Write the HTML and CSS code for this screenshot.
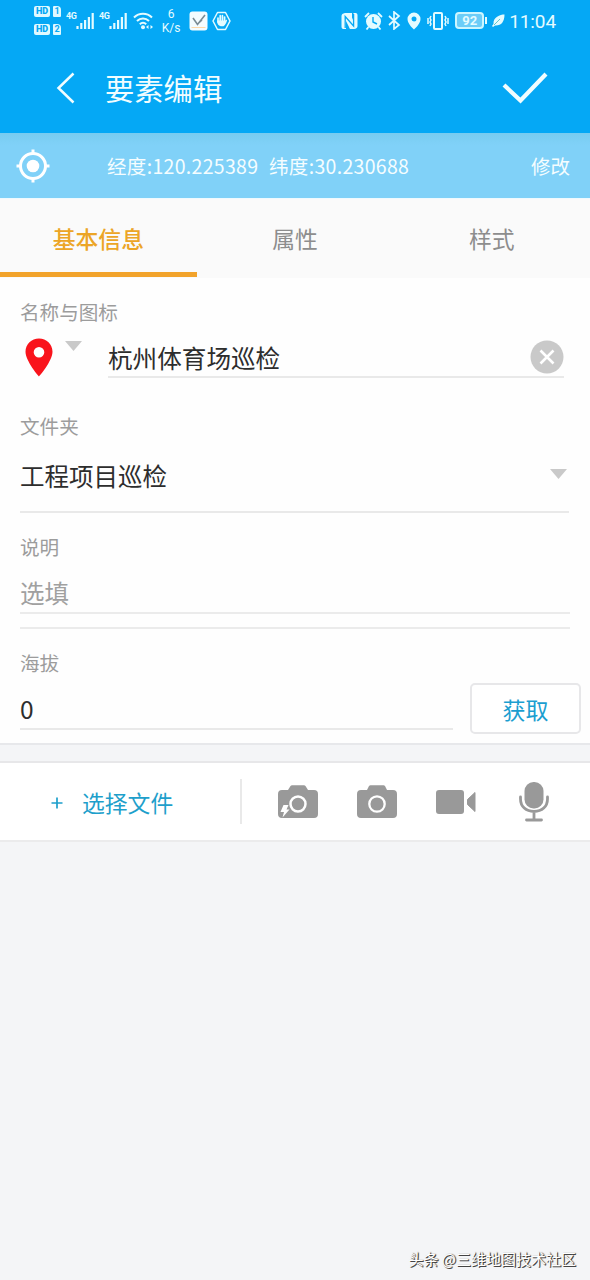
FILE: index.html
```html
<!DOCTYPE html>
<html lang="zh-CN">
<head>
<meta charset="utf-8">
<title>要素编辑</title>
<link rel="stylesheet" href="styles.css">
</head>
<body>
<div class="screen">
  <header class="header">
    <div class="status">
      <div class="status-left">
        <div class="sims">
          <div class="sim"><b>HD</b><i>1</i></div>
          <div class="sim"><b>HD</b><i>2</i></div>
        </div>
        <div class="signal"><span>4G</span>
          <svg width="18" height="17" viewBox="0 0 18 17"><path d="M1.5 17v-3M5.3 17v-6M9.1 17V8M12.9 17V5M16.7 17V1" stroke="currentColor" stroke-width="2.2"/></svg></div>
        <div class="signal"><span>4G</span>
          <svg width="18" height="17" viewBox="0 0 18 17"><path d="M1.5 17v-3M5.3 17v-6M9.1 17V8M12.9 17V5M16.7 17V1" stroke="currentColor" stroke-width="2.2"/></svg></div>
        <svg class="wifi" width="22" height="18" viewBox="0 0 22 18"><g fill="none" stroke="currentColor" stroke-width="2"><path d="M1 5.5c5-5 13-5 18 0M4 9c3.500-3.500 8.500-3.500 12 0M6.800 12.200c2-2 4.400-2 6.400 0"/></g><circle cx="10" cy="15.300" r="2" fill="currentColor"/><path d="M13 15l2.500-2v4zM20 15l-2.500-2v4z" fill="currentColor"/></svg>
        <div class="speed"><span>6</span><span>K/s</span></div>
        <svg class="app" width="19" height="20" viewBox="0 0 19 20"><rect x=".5" y=".5" width="18" height="19" rx="3" fill="#f4fcff"/><path d="M4 7l4.500 6.500L16 4M8 13.500L13 9" fill="none" stroke="#7a8b94" stroke-width="1.600"/><path d="M2.500 16.500h14" stroke="#ffd8a8"/></svg>
        <svg class="hand" width="19" height="20" viewBox="0 0 19 20"><path d="M5.500 1.500h8L18 10l-4.500 8.500h-8L1 10z" fill="none" stroke="currentColor" stroke-width="1.500" stroke-linejoin="round"/><path d="M6 11V7M8.200 10V4.700M10.400 10V4.500M12.600 10V6" stroke="currentColor" stroke-width="1.700" stroke-linecap="round"/><path d="M5.200 9.500h8.200l1.500-1c.8.700-1.600 6.300-3.500 6.700-3.500.6-6.400-1-6.200-5.700z" fill="currentColor"/></svg>
      </div>
      <div class="status-right">
        <svg width="17" height="18" viewBox="0 0 17 18"><path d="M4 1h7v16H9L5 9v8H2q-1.500-.5-1.500-2V4Q.5 1.500 4 1z" fill="currentColor"/><path d="M6 1h3l3.500 8V1H15q1.500.5 1.500 2v11q0 2.500-3.500 3H9" fill="currentColor"/><path d="M4.200 16V4.500L12.600 14V2" fill="none" stroke="#05a8f5" stroke-width="1.300"/></svg>
        <svg class="alarm" width="19" height="18" viewBox="0 0 19 18"><circle cx="9.500" cy="9.500" r="7.500" fill="currentColor"/><path d="M1 5l4-4M18 5l-4-4M4.500 15l-2 2.500M14.500 15l2 2.500" stroke="currentColor" stroke-width="1.800"/><path d="M9 5v5l4 2" fill="none" stroke="#05a8f5" stroke-width="1.400"/></svg>
        <svg width="13" height="19" viewBox="0 0 13 19"><path d="M1 5l10 9-5 4V1l5 4-10 9" fill="none" stroke="currentColor" stroke-width="1.700"/></svg>
        <svg width="14" height="18" viewBox="0 0 14 18"><path fill-rule="evenodd" d="M7 .5a6.500 6.500 0 0 0-6.500 6.500C.5 12 7 17.500 7 17.500S13.500 12 13.500 7A6.500 6.500 0 0 0 7 .5zM7 4.500a2.500 2.500 0 1 1 0 5 2.500 2.500 0 0 1 0-5z" fill="currentColor"/></svg>
        <svg width="22" height="18" viewBox="0 0 22 18"><g fill="none" stroke="currentColor"><rect x="7" y="1" width="8" height="16" rx="1" stroke-width="2"/><path d="M4 4L3 6l1 2-1 2 1 2-1 2M18 4l1 2-1 2 1 2-1 2 1 2M1 6v6M21 6v6" stroke-width="1.500"/></g></svg>
        <div class="battery">92</div>
        <svg class="leaf" width="13" height="13" viewBox="0 0 13 13"><path d="M12.500.5C8 .5 1 3 1.500 10L0 12l1 1 2-1.500C9 12 12.500 8 12.500.5z" fill="currentColor"/><path d="M2 11l6-6" stroke="#62c7c9"/></svg>
        <span class="time">11:04</span>
      </div>
    </div>
    <div class="titlebar">
      <svg class="back" width="20" height="32" viewBox="0 0 20 32"><path d="M17.500 1.500L2.500 16l15 14.500" fill="none" stroke="currentColor" stroke-width="2.500"/></svg>
      <h1>要素编辑</h1>
      <svg class="confirm" width="46" height="32" viewBox="0 0 46 32"><path d="M2 13l16.500 15.500L44 2" fill="none" stroke="currentColor" stroke-width="4.200"/></svg>
    </div>
  </header>

  <div class="coords">
    <svg class="locate" width="34" height="34" viewBox="0 0 34 34"><circle cx="17" cy="17" r="12.500" fill="none" stroke="currentColor" stroke-width="3"/><circle cx="17" cy="17" r="6.300" fill="currentColor"/><path d="M17 .5V5M17 29v4.500M.5 17H5M29 17h4.500" stroke="currentColor" stroke-width="3"/></svg>
    <span class="lng">经度:120.225389</span>
    <span class="lat">纬度:30.230688</span>
    <span class="modify">修改</span>
  </div>

  <nav class="tabs">
    <div class="tab active">基本信息</div>
    <div class="tab">属性</div>
    <div class="tab">样式</div>
  </nav>

  <main class="form">
    <section class="field name-field">
      <label>名称与图标</label>
      <div class="name-row">
        <svg class="pin" width="28" height="39" viewBox="0 0 28 39"><path fill-rule="evenodd" d="M14 .5C6.500.5.500 6.200.500 13.700.500 23 14 38.500 14 38.500S27.500 23 27.500 13.700C27.500 6.200 21.500.5 14 .5zM14 9a5.300 5.300 0 1 1 0 10.600A5.300 5.300 0 0 1 14 9z" fill="#f9141c"/></svg>
        <svg class="caret" width="17" height="10" viewBox="0 0 17 10"><path d="M0 0h17L8.500 10z" fill="#c9c9c9"/></svg>
        <div class="name-input"><span>杭州体育场巡检</span>
          <svg width="34" height="34" viewBox="0 0 34 34"><circle cx="17" cy="17" r="16.500" fill="#c9c9c9"/><path d="M10.500 10.500l13 13M23.500 10.500l-13 13" stroke="#fff" stroke-width="2.600"/></svg>
        </div>
      </div>
    </section>
    <section class="field folder-field">
      <label>文件夹</label>
      <div class="select"><span>工程项目巡检</span>
        <svg width="17" height="10" viewBox="0 0 17 10"><path d="M0 0h17L8.500 10z" fill="#c9c9c9"/></svg></div>
    </section>
    <section class="field note-field">
      <label>说明</label>
      <div class="note">选填</div>
      <div class="rule"></div>
    </section>
    <section class="field altitude-field">
      <label>海拔</label>
      <div class="altitude-row">
        <div class="altitude">0</div>
        <button class="fetch">获取</button>
      </div>
    </section>
  </main>

  <div class="attachments">
    <div class="choose"><svg width="12" height="12" viewBox="0 0 12 12"><path d="M6 .5v11M.5 6h11" stroke="currentColor" stroke-width="1.700"/></svg><span>选择文件</span></div>
    <div class="media">
      <svg width="40" height="34" viewBox="0 0 40 34"><path d="M4 5h6l2.500-4q.6-.8 1.500-.8h12q.9 0 1.500.8L30 5h6q4 0 4 4v20q0 4-4 4H4q-4 0-4-4V9q0-4 4-4z" fill="#999"/><circle cx="20" cy="19" r="7.500" fill="none" stroke="#fff" stroke-width="2.500"/><path d="M5.500 20h5L8.500 24.500h3L4.500 32.500 6 27H2.500z" fill="#fff"/></svg>
      <svg width="40" height="34" viewBox="0 0 40 34"><path d="M4 5h6l2-4q.6-.8 1.500-.8h13q.9 0 1.500.8l2 4h6q4 0 4 4v20q0 4-4 4H4q-4 0-4-4V9q0-4 4-4z" fill="#999"/><circle cx="20" cy="19" r="7.700" fill="none" stroke="#fff" stroke-width="2.300"/></svg>
      <svg width="40" height="24" viewBox="0 0 40 24"><rect width="28" height="24" rx="3" fill="#999"/><path d="M31.500 9.500L39 2.500v19l-7.500-7z" fill="#999" stroke="#999" stroke-linejoin="round"/></svg>
      <svg class="mic" width="30" height="40" viewBox="0 0 30 40"><rect x="5.500" width="19" height="26.500" rx="9" fill="#999"/><path d="M1.500 15v2c0 7.500 5.500 12.500 13.500 12.500S28.500 24.500 28.500 17v-2M15 29.500v8M7.500 38h15" fill="none" stroke="#999" stroke-width="2.800" stroke-linecap="round"/></svg>
    </div>
  </div>
  <footer class="watermark">头条 @三维地图技术社区</footer>
</div>
</body>
</html>
```
FILE: styles.css
```css
* { box-sizing: border-box; }
body { margin: 0; font-family: "Noto Sans CJK SC", sans-serif; background: #f4f5f7; }
svg { display: block; flex: none; }
.screen { width: 590px; height: 1280px; display: flex; flex-direction: column; }

.header { height: 133px; background: #05a8f5; color: #e4fbff; }
.status { height: 44px; display: flex; justify-content: space-between; padding: 0 34px; }
.status-left, .status-right { display: flex; align-items: center; height: 41px; }
.sims { display: flex; flex-direction: column; gap: 7px; width: 27px; }
.sim { display: flex; gap: 3px; height: 11px; font: bold 9px/11px Roboto, sans-serif; color: #05a8f5; }
.sim b { width: 16px; background: #dff9ff; border-radius: 2px; text-align: center; }
.sim i { width: 8px; background: #dff9ff; border-radius: 1px 4px 1px 1px; text-align: center; font-style: normal; }
.signal { display: flex; margin-left: 5px; width: 28px; }
.signal span { width: 10px; font: bold 9px/10px Roboto, sans-serif; letter-spacing: -.5px; margin-top: -1px; }
.wifi { margin-left: 6px; }
.speed { display: flex; flex-direction: column; align-items: center; width: 20px; margin-left: 6px; padding-top: 1px; font: 12px/14px Roboto, sans-serif; }
.app { margin-left: 8px; }
.hand { margin-left: 4px; }
.status-right { gap: 6px; }
.alarm { margin-right: -1px; }
.battery { position: relative; width: 29px; height: 17px; border: 2px solid #ccf6ff; border-radius: 4px; background: #6bcdf8; font: bold 13px/14px Roboto, sans-serif; text-align: center; }
.battery::after { content: ""; position: absolute; right: -5px; top: 3px; width: 2px; height: 7px; background: currentColor; }
.leaf { margin-left: 2px; }
.time { font: 19px/22px Roboto, sans-serif; letter-spacing: -.1px; margin: 2px 0 0 -2px; }
.titlebar { display: flex; align-items: center; height: 89px; padding: 0 42px 2px 56px; color: #f1fdff; }
.titlebar h1 { margin: -2px 0 0 29px; font-weight: 400; font-size: 29.3px; line-height: 44px; }
.confirm { margin-left: auto; }

.coords { height: 65px; display: flex; align-items: center; padding: 0 20px 0 16px; background: linear-gradient(#78ccf0, #80d1f8 12px); color: #f5fdff; font-size: 19.5px; line-height: 30px; }
.coords span { padding-top: 1px; }
.locate { color: #fff; }
.lng { width: 162px; margin-left: 57px; letter-spacing: .32px; white-space: nowrap; }
.lat { letter-spacing: .32px; }
.modify { margin-left: auto; }

.tabs { height: 80px; display: flex; background: #fafafa; border-top: 1px solid #eefaff; }
.tab { flex: 1; height: 78px; padding-top: 23px; text-align: center; font-size: 22.8px; line-height: 34px; color: #8d8d8d; }
.tab.active { color: #eca526; font-weight: 500; border-bottom: 5px solid #f2a32b; }

.form { height: 467px; background: #fefefe; border-bottom: 2px solid #e7e8eb; }
.field { padding-left: 20px; color: #2d2d2d; }
label { display: block; font-size: 19.6px; line-height: 28px; color: #9c9c9c; }
.name-field { height: 114px; padding-top: 20px; }
.name-row { display: flex; padding: 12px 26px 0 5px; }
.caret { margin: 3px 0 0 12px; }
.name-input { flex: 1; height: 40px; margin-left: 26px; display: flex; align-items: center; justify-content: space-between; font-size: 24.6px; line-height: 36px; border-bottom: 2px solid #e9e9e9; }
.field.folder-field { height: 121px; padding: 20px 21px 0 20px; }
.select { height: 73px; display: flex; justify-content: space-between; align-items: center; border-bottom: 2px solid #e9e9e9; font-size: 24.5px; line-height: 36px; }
.select svg { margin-top: -4px; margin-right: 2px; }
.field.note-field { height: 116px; padding: 20px 20px 0 20px; }
.note { height: 53px; border-bottom: 2px solid #ebebeb; font-size: 24.5px; line-height: 36px; padding-top: 14px; color: #a0a0a0; }
.rule { height: 15px; border-bottom: 2px solid #ebebeb; }
.altitude-field { padding-top: 20px; }
.altitude-row { display: flex; margin-top: 6px; }
.altitude { width: 433px; height: 47px; font-size: 24.5px; line-height: 36px; border-bottom: 2px solid #e9e9e9; padding-top: 8px; }
.fetch { width: 111px; height: 51px; margin-left: 17px; padding: 0; background: #fff; border: 2px solid #e7e7e9; border-radius: 5px; color: #1b9ed0; font: 23px/34px "Noto Sans CJK SC", sans-serif; }

.attachments { height: 81px; margin-top: 16px; background: #fff; border-top: 2px solid #e7e7e9; border-bottom: 2px solid #ebebec; display: flex; align-items: center; }
.choose { width: 242px; height: 45px; display: flex; align-items: center; padding-left: 51px; gap: 19px; border-right: 2px solid #e9e9e9; color: #1e9fcb; font-size: 22.8px; line-height: 34px; }
.choose svg { margin-top: 2px; }
.choose span { margin-top: 2px; }
.media { flex: 1; display: flex; gap: 39px; align-items: center; padding-left: 36px; }
.mic { margin-left: 4px; }
.watermark { margin-top: auto; padding: 0 14px 9px 0; text-align: right; font-size: 15px; line-height: 24px; color: #fff; text-shadow: 1px 1px 0 #444, 1px 0 1px #555; }
```
